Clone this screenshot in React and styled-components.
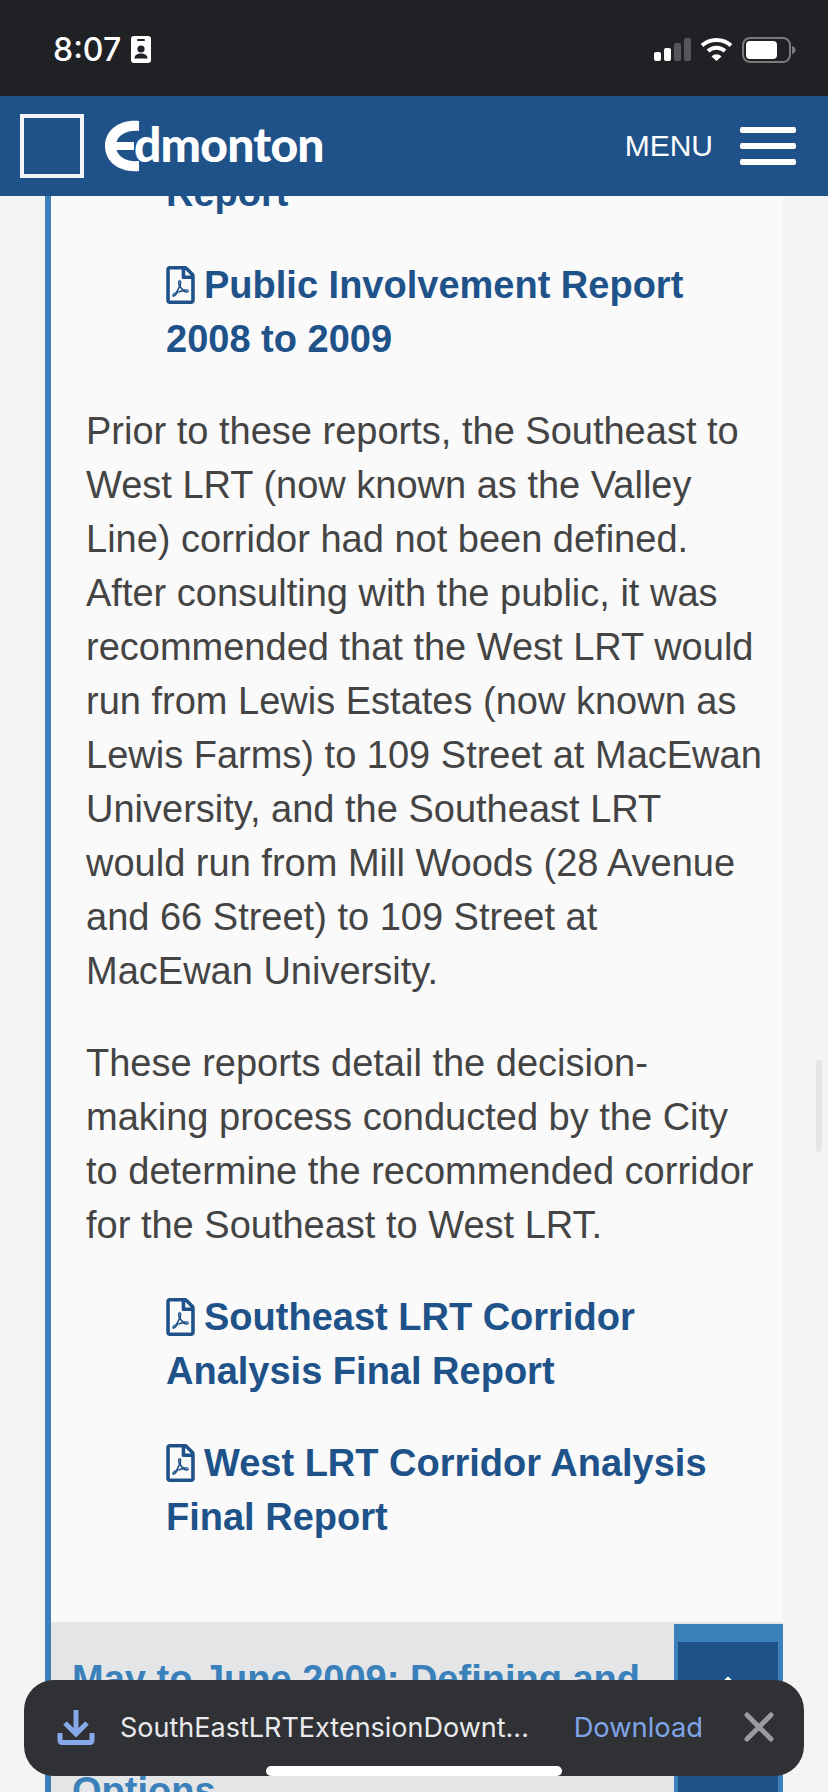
import React from 'react'
import styled, { createGlobalStyle } from 'styled-components'
import { FaRegFilePdf, FaChevronUp } from 'react-icons/fa'

const Global = createGlobalStyle`
    html, body {
        margin: 0;
        padding: 0;
        background: #f3f5f4;
    }
`

const Screen = styled.div`
    position: relative;
    width: 828px;
    height: 1792px;
    overflow: hidden;
    background: #f3f5f4;
    font-family: "Liberation Sans", Arial, sans-serif;
`

const StatusBar = styled.div`
    position: relative;
    z-index: 2;
    height: 96px;
    box-sizing: border-box;
    background: #202125;
    display: flex;
    justify-content: space-between;
    align-items: flex-start;
    padding: 36px 32px 0 53px;
`

const Clock = styled.div`
    display: flex;
    align-items: center;
    gap: 10px;
    color: #fff;
    font-family: Inter, sans-serif;
    font-weight: 500;
    font-size: 32px;
    line-height: 27px;
`

const StatusIcons = styled.div`
    display: flex;
    align-items: flex-start;
    gap: 9px;
    padding-top: 1px;
`

const Header = styled.header`
    position: relative;
    z-index: 2;
    height: 100px;
    box-sizing: border-box;
    background: #20528a;
    display: flex;
    align-items: center;
    padding: 0 32px 0 20px;
`

const LogoSquare = styled.div`
    width: 64px;
    height: 64px;
    box-sizing: border-box;
    border: 4px solid #f2f5f8;
    margin-right: 20px;
`

const Logo = styled.div`
    display: flex;
    align-items: center;
    flex: 1;
    color: #fff;
`

const LogoWord = styled.span`
    font-family: Lato, sans-serif;
    font-weight: 900;
    font-size: 48px;
    line-height: 50px;
    letter-spacing: -0.8px;
    margin-left: -6px;
    margin-top: -4px;
`

const MenuLabel = styled.span`
    color: #fff;
    font-size: 30px;
    margin-right: 27px;
`

const Burger = styled.div`
    display: flex;
    flex-direction: column;
    gap: 10px;
    width: 56px;
`

const BurgerBar = styled.span`
    display: block;
    height: 6px;
    border-radius: 2px;
    background: #fff;
`

const Page = styled.main`
    margin-top: -84px;
    margin-left: 45px;
    width: 738px;
    box-sizing: border-box;
    border-left: 6px solid #3a80ba;
    background: #fafafa;
`

const Body = styled.div`
    padding: 0 18px 78px 35px;
`

const Paragraph = styled.p`
    margin: 0 0 38px;
    color: #444;
    font-size: 38px;
    line-height: 54px;
`

const LinkList = styled.div`
    display: flex;
    flex-direction: column;
    gap: 38px;
    margin: 0 0 38px;
    padding-left: 80px;
    &:last-child {
        margin-bottom: 0;
    }
`

const DocLink = styled.a`
    display: block;
    color: #20528a;
    font-size: 38px;
    line-height: 54px;
    font-weight: bold;
    svg {
        width: 29px;
        height: 38px;
        vertical-align: -6px;
        margin-right: 9px;
    }
`

const Band = styled.div`
    display: flex;
    justify-content: space-between;
    align-items: flex-start;
    background: #e4e5e7;
`

const BandTitle = styled.h3`
    margin: 0;
    padding: 29px 0 0 21px;
    width: 620px;
    box-sizing: border-box;
    color: #3a80ba;
    font-size: 38px;
    line-height: 56px;
    font-weight: bold;
`

const ToggleOuter = styled.div`
    margin-top: 2px;
    width: 109px;
    height: 170px;
    flex-shrink: 0;
    box-sizing: border-box;
    background: #3a80ba;
    padding: 18px 5px 0 4px;
`

const ToggleInner = styled.div`
    height: 152px;
    background: #20528a;
    color: #fff;
    display: flex;
    justify-content: center;
    padding-top: 28px;
    box-sizing: border-box;
    font-size: 28px;
`

const Scrollbar = styled.div`
    position: absolute;
    left: 816px;
    top: 1060px;
    width: 6px;
    height: 92px;
    border-radius: 3px;
    background: #e4e5e5;
`

const Toast = styled.div`
    position: absolute;
    z-index: 3;
    left: 24px;
    top: 1680px;
    width: 780px;
    height: 96px;
    box-sizing: border-box;
    border-radius: 30px;
    background: #303135;
    display: flex;
    align-items: center;
    padding: 0 30px 2px 33px;
`

const FileName = styled.span`
    margin-left: 25px;
    flex: 1;
    color: #e8eaed;
    font-family: Inter, sans-serif;
    font-size: 27px;
    white-space: nowrap;
`

const DownloadAction = styled.span`
    color: #7fa5e8;
    font-family: Inter, sans-serif;
    font-size: 27.3px;
    margin-right: 41px;
`

const HomeBar = styled.div`
    position: absolute;
    z-index: 4;
    left: 266px;
    top: 1766px;
    width: 296px;
    height: 10px;
    border-radius: 5px;
    background: #fff;
`

function BadgeIcon() {
    return (
        <svg width="20" height="27" viewBox="0 0 20 27">
            <rect width="20" height="27" rx="3" fill="#fff" />
            <rect x="6" y="3" width="8" height="2" rx="1" fill="#202125" />
            <circle cx="10" cy="13" r="3.6" fill="#202125" />
            <path d="M3.5 22.5c0-3.6 3-5 6.5-5s6.500 1.400 6.500 5z" fill="#202125" />
        </svg>
    )
}

function SignalIcon() {
    return (
        <svg width="37" height="24" viewBox="0 0 37 24">
            <rect x="0" y="15" width="7" height="9" rx="2" fill="#fff" />
            <rect x="10" y="11" width="7" height="13" rx="2" fill="#fff" />
            <rect x="20" y="6" width="7" height="18" rx="2" fill="#55565a" />
            <rect x="30" y="1" width="7" height="23" rx="2" fill="#55565a" />
        </svg>
    )
}

function WifiIcon() {
    return (
        <svg width="33" height="24" viewBox="0 0 33 24" fill="none" stroke="#fff" strokeWidth="4">
            <path d="M2 8.500C10 1 23 1 31 8.500" />
            <path d="M8 14C13 9.500 20 9.500 25 14" />
            <path d="M11.500 19.500L16.500 24L21.500 19.500C18.500 16.500 14.500 16.500 11.500 19.500Z" fill="#fff" stroke="none" />
        </svg>
    )
}

function BatteryIcon() {
    return (
        <svg width="54" height="26" viewBox="0 0 54 26">
            <rect x="1" y="1" width="47" height="24" rx="7" fill="none" stroke="#7a7a7c" strokeWidth="2" />
            <rect x="4" y="4" width="31" height="18" rx="4" fill="#fff" />
            <path d="M50 9c2 .5 3.500 2 3.500 4s-1.500 3.500-3.500 4z" fill="#7a7a7c" />
        </svg>
    )
}

function LogoE() {
    return (
        <svg width="36" height="52" viewBox="0 0 36 52" fill="#fff">
            <path d="M35 1C16-1 1 10 1 26C1 42 16 53 35 51V41C24 42 15 38 12.500 30H30V22H12.500C15 14 24 10 35 11Z" />
        </svg>
    )
}

function DownloadIcon() {
    return (
        <svg width="38" height="36" viewBox="0 0 38 36" fill="none" stroke="#86a9ea" strokeWidth="5">
            <path d="M19 1V24" />
            <path d="M8 14L19 25L30 14" />
            <path d="M3 24V31C3 32.500 4 33.500 5.500 33.500H32.500C34 33.500 35 32.500 35 31V24" />
        </svg>
    )
}

function CloseIcon() {
    return (
        <svg width="30" height="30" viewBox="0 0 30 30" stroke="#9a9b9f" strokeWidth="5" strokeLinecap="round">
            <path d="M3 3L27 27M27 3L3 27" />
        </svg>
    )
}

function App() {
    return (
        <Screen>
            <Global />
            <StatusBar>
                <Clock>8:07 <BadgeIcon /></Clock>
                <StatusIcons>
                    <SignalIcon />
                    <WifiIcon />
                    <BatteryIcon />
                </StatusIcons>
            </StatusBar>
            <Header>
                <LogoSquare />
                <Logo>
                    <LogoE />
                    <LogoWord>dmonton</LogoWord>
                </Logo>
                <MenuLabel>MENU</MenuLabel>
                <Burger>
                    <BurgerBar />
                    <BurgerBar />
                    <BurgerBar />
                </Burger>
            </Header>
            <Page>
                <Body>
                    <LinkList>
                        <DocLink><FaRegFilePdf />West LRT Public Involvement Report</DocLink>
                        <DocLink><FaRegFilePdf />Public Involvement Report 2008 to 2009</DocLink>
                    </LinkList>
                    <Paragraph>
                        Prior to these reports, the Southeast to West LRT (now known as the Valley Line) corridor had not been defined. After consulting with the public, it was recommended that the West LRT would run from Lewis Estates (now known as Lewis Farms) to 109 Street at MacEwan University, and the Southeast LRT would run from Mill Woods (28 Avenue and 66 Street) to 109 Street at MacEwan University.
                    </Paragraph>
                    <Paragraph>
                        These reports detail the decision-making process conducted by the City to determine the recommended corridor for the Southeast to West LRT.
                    </Paragraph>
                    <LinkList>
                        <DocLink><FaRegFilePdf />Southeast LRT Corridor Analysis Final Report</DocLink>
                        <DocLink><FaRegFilePdf />West LRT Corridor Analysis Final Report</DocLink>
                    </LinkList>
                </Body>
                <Band>
                    <BandTitle>May to June 2009: Defining and Refining Corridor<br />Options</BandTitle>
                    <ToggleOuter>
                        <ToggleInner><FaChevronUp /></ToggleInner>
                    </ToggleOuter>
                </Band>
            </Page>
            <Scrollbar />
            <Toast>
                <DownloadIcon />
                <FileName>SouthEastLRTExtensionDownt...</FileName>
                <DownloadAction>Download</DownloadAction>
                <CloseIcon />
            </Toast>
            <HomeBar />
        </Screen>
    )
}

export default App
